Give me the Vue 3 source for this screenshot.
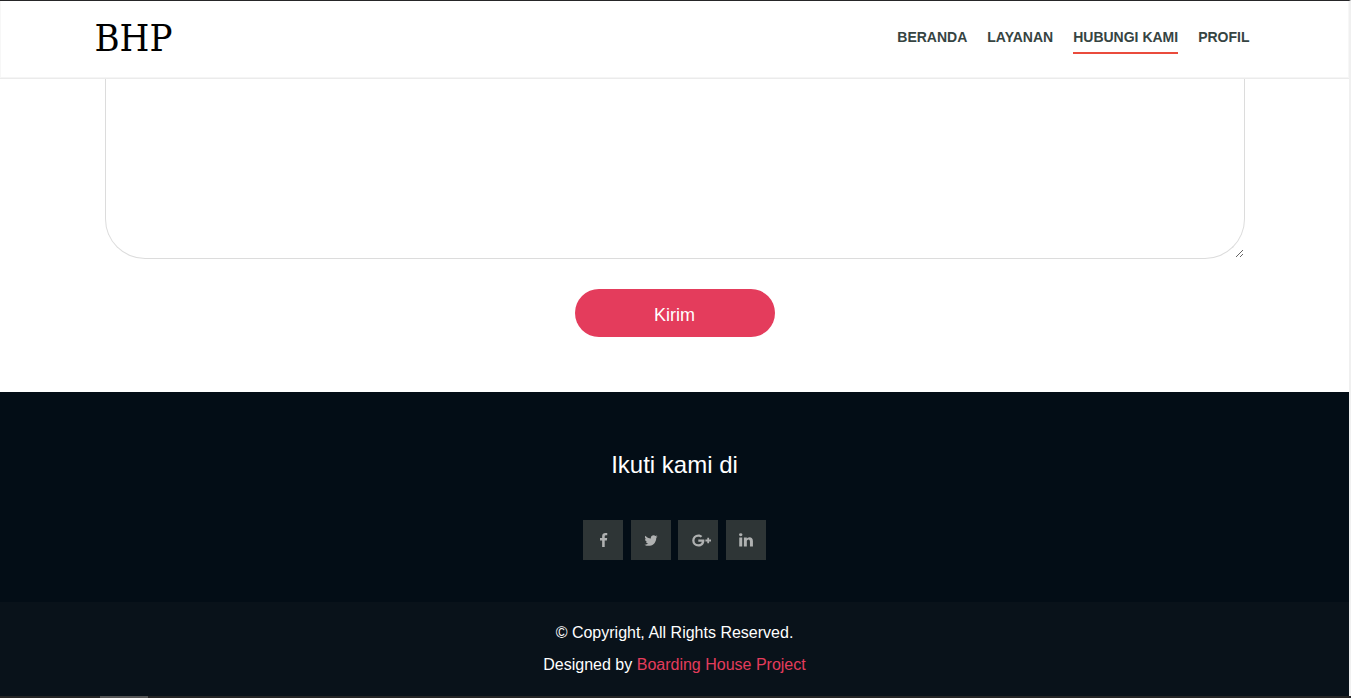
<script setup>
import { ref } from 'vue'

const message = ref('')

const links = [
  { label: 'BERANDA', active: false },
  { label: 'LAYANAN', active: false },
  { label: 'HUBUNGI KAMI', active: true },
  { label: 'PROFIL', active: false },
]

const socials = [
  {
    name: 'Facebook',
    box: '384 0 1024 1792',
    size: 'narrow',
    path: 'M1343 12v264h-157q-86 0-116 36t-30 108v189h293l-39 296h-254v759h-306v-759h-255v-296h255v-218q0-186 104-288.500t277-102.500q147 0 228 12z',
  },
  {
    name: 'Twitter',
    box: '64 0 1664 1792',
    size: 'medium',
    path: 'M1684 408q-67 98-162 167 1 14 1 42 0 130-38 259.500t-115.500 248.500-184.500 210.500-258 146-323 54.500q-271 0-496-145 35 4 78 4 225 0 401-138-105-2-188-64.500t-114-159.500q33 5 61 5 43 0 85-11-112-23-185.500-111.500t-73.500-205.500v-4q68 38 146 41-66-44-105-115t-39-154q0-88 44-163 121 149 294.500 238.500t371.500 99.500q-8-38-8-74 0-134 94.500-228.500t228.500-94.500q140 0 236 102 109-21 205-78-37 115-142 178 93-10 186-50z',
  },
  {
    name: 'Google Plus',
    box: '0 0 20 14',
    size: 'wide',
    path: 'M6.3 5.9h6q.1.5.1 1.1c0 3.600-2.400 6.100-6.100 6.100a6.100 6.100 0 1 1 0-12.200c1.700 0 3 .6 4.100 1.600L8.700 4.100C8.300 3.700 7.500 3.200 6.300 3.200a3.800 3.800 0 0 0 0 7.600c2.400 0 3.300-1.700 3.500-2.600H6.300zM15.300 4.300h1.800v1.800h1.900v1.900h-1.900v1.800h-1.800v-1.800h-1.900v-1.900h1.900z',
  },
  {
    name: 'LinkedIn',
    box: '0 128 1536 1664',
    size: 'medium',
    path: 'M349 625v991h-330v-991h330zm21-306q1 73-50.500 122t-135.500 49h-2q-82 0-132-49t-50-122q0-74 51.500-122.500t134.500-48.500 133 48.500 51 122.500zm1166 729v568h-329v-530q0-105-40.500-164.500t-126.500-59.500q-63 0-105.500 34.500t-63.500 85.500q-11 30-11 81v553h-329q2-399 2-647t-1-296l-1-48h329v144h-2q20-32 41-56t56.500-52 87-43.500 114.500-15.500q171 0 275 113.500t104 332.500z',
  },
]
</script>

<template>
  <div class="page">
    <header class="header">
      <div class="container bar">
        <a href="#" class="logo">BHP</a>
        <nav class="nav">
          <a v-for="link in links" :key="link.label" href="#" :class="{ active: link.active }">{{ link.label }}</a>
        </nav>
      </div>
    </header>

    <main class="contact">
      <form class="form" @submit.prevent>
        <textarea v-model="message" class="message" aria-label="Pesan"></textarea>
        <button type="submit" class="send">Kirim</button>
      </form>
    </main>

    <footer>
      <section class="follow">
        <h2>Ikuti kami di</h2>
        <div class="socials">
          <template v-for="s in socials" :key="s.name">
            <a href="#" class="social" :aria-label="s.name">
              <svg :viewBox="s.box" :class="s.size" aria-hidden="true"><path :d="s.path" /></svg>
            </a>{{ ' ' }}
          </template>
        </div>
      </section>
      <section class="copyright">
        <p>© Copyright, All Rights Reserved.</p>
        <p>Designed by <a href="#">Boarding House Project</a></p>
      </section>
    </footer>
  </div>
  <div class="track"><div class="thumb"></div></div>
</template>

<style>
body {
  background: #fff;
}
</style>

<style scoped>
.page {
  border-top: 1px solid #262628;
  border-right: 2px solid #f0f0f0;
  font-family: "Liberation Sans", Arial, sans-serif;
  font-size: 16px;
}
.page * {
  box-sizing: border-box;
}
.header {
  border: 1px solid #f7f7f7;
  border-top: 0;
  border-bottom-color: #f5f5f5;
  background: #fff;
}
.contact {
  border-top: 1px solid #ebebeb;
}
.container {
  max-width: 1170px;
  margin: 0 auto;
}
.bar {
  display: flex;
  justify-content: space-between;
  align-items: flex-start;
  height: 76px;
  padding: 0 10px 0 5px;
}
.logo {
  color: #000;
  font-family: "DejaVu Serif Condensed", "DejaVu Serif", serif;
  font-size: 38px;
  line-height: 74px;
  text-decoration: none;
}
.nav {
  display: flex;
  gap: 20px;
  padding-top: 26px;
}
.nav a {
  padding-bottom: 5px;
  border-bottom: 2px solid transparent;
  color: #364442;
  font-size: 14px;
  font-weight: bold;
  line-height: 20px;
  text-decoration: none;
}
.nav .active {
  border-color: #ea4b3c;
}
.form {
  display: flex;
  flex-direction: column;
  align-items: center;
  max-width: 1170px;
  margin: 0 auto;
  padding: 0 15px 55px;
}
.message {
  display: block;
  width: 100%;
  height: 180px;
  padding: 20px 30px;
  border: 1px solid #dcdcdc;
  border-top: 0;
  border-radius: 0 0 40px 40px;
  outline: 0;
  background: #fff;
  font: inherit;
  resize: vertical;
}
.send {
  width: 200px;
  height: 48px;
  margin-top: 30px;
  padding: 4px 0 0;
  border: 0;
  border-radius: 24px;
  background: #e43c5c;
  color: #fff;
  font-family: inherit;
  font-size: 18px;
}
.follow {
  padding: 58px 0 42px;
  background: #030d16;
  text-align: center;
}
h2 {
  margin: 0 0 40px;
  color: #fff;
  font-size: 24px;
  font-weight: normal;
  line-height: 30px;
}
.socials {
  height: 40px;
  font-size: 13px;
}
.social {
  display: inline-flex;
  align-items: center;
  justify-content: center;
  width: 40px;
  height: 40px;
  margin: 0 2px;
  background: #2e3536;
  vertical-align: top;
}
.social svg {
  height: 15px;
  fill: #afb1b1;
}
.narrow {
  width: 9px;
}
.medium {
  width: 14px;
}
.wide {
  width: 20px;
  margin-left: 8px;
}
.copyright {
  padding: 15px 0;
  background: #09121a;
  color: #fff;
  line-height: 32px;
  text-align: center;
}
.copyright p {
  margin: 0;
}
.copyright a {
  color: #e43c5c;
  text-decoration: none;
}
.track {
  height: 2px;
  padding-left: 100px;
  background: #252525;
}
.thumb {
  width: 48px;
  height: 2px;
  background: #555;
}
</style>
